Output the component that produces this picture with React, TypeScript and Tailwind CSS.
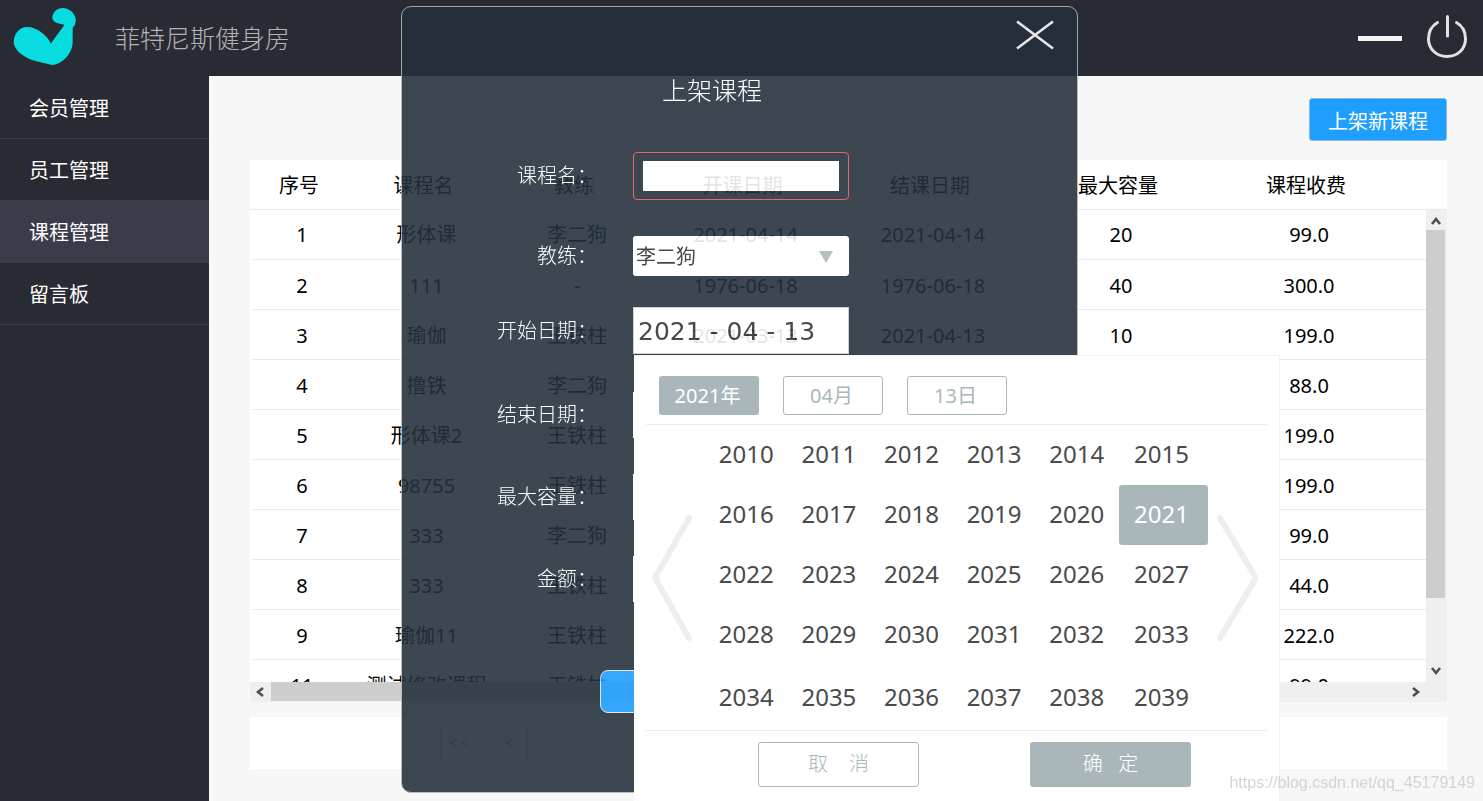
import React, { useState } from "react";

type Course = {
  id: string;
  name: string;
  coach: string;
  start?: string;
  end?: string;
  capacity?: string;
  price: string;
};

const menu = ["会员管理", "员工管理", "课程管理", "留言板"];
const headings = ["序号", "课程名", "教练", "开课日期", "结课日期", "最大容量", "课程收费"];

const courses: Course[] = [
  { id: "1", name: "形体课", coach: "李二狗", start: "2021-04-14", end: "2021-04-14", capacity: "20", price: "99.0" },
  { id: "2", name: "111", coach: "-", start: "1976-06-18", end: "1976-06-18", capacity: "40", price: "300.0" },
  { id: "3", name: "瑜伽", coach: "王铁柱", start: "2021-03-13", end: "2021-04-13", capacity: "10", price: "199.0" },
  { id: "4", name: "撸铁", coach: "李二狗", price: "88.0" },
  { id: "5", name: "形体课2", coach: "王铁柱", price: "199.0" },
  { id: "6", name: "98755", coach: "王铁柱", price: "199.0" },
  { id: "7", name: "333", coach: "李二狗", price: "99.0" },
  { id: "8", name: "333", coach: "王铁柱", price: "44.0" },
  { id: "9", name: "瑜伽11", coach: "王铁柱", price: "222.0" },
  { id: "11", name: "测试修改课程", coach: "王铁柱", price: "99.0" },
];

const years = Array.from({ length: 30 }, (_, i) => 2010 + i);

function Columns() {
  return (
    <colgroup>
      <col className="w-[98px]" />
      <col className="w-[151px]" />
      <col className="w-[150px]" />
      <col className="w-[187px]" />
      <col className="w-[188px]" />
      <col className="w-[188px]" />
      <col className="w-[188px]" />
      <col />
    </colgroup>
  );
}

function Logo() {
  return (
    <svg viewBox="40 20 192 177" className="h-[59px] w-16" aria-hidden="true">
      <path
        fill="#08dce0"
        d="M154 130C142 105 112 80 82 80C58 80 42 102 42 126C43 150 75 174 110 183C130 187 150 194 160 194C182 192 218 165 219 125V82C225 78 229 69 228 57C226 38 208 23 190 23C171 23 158 38 158 52C159 66 178 70 194 73C184 90 165 111 154 130Z"
      />
    </svg>
  );
}

function Header() {
  return (
    <header className="flex h-[76px] items-center bg-[#292b34] pl-[13px] pr-[15px]">
      <div className="flex h-full items-start pt-[7px]">
        <Logo />
      </div>
      <h1 className="ml-[38px] pt-0.5 text-[25px] font-light text-[#b4b4b4]">菲特尼斯健身房</h1>
      <div className="ml-auto flex items-center gap-6">
        <button type="button" aria-label="最小化" className="h-[5px] w-11 bg-[#f4f4f4]" />
        <button type="button" aria-label="退出">
          <svg viewBox="0 0 42 46" className="h-[46px] w-[42px]" fill="none" stroke="#e2e2e2" strokeWidth="3" strokeLinecap="round">
            <path d="M11.500 7.500C5.500 11 2.500 17 2.500 24C2.500 34 10.500 41.500 21 41.500C31.500 41.500 39.500 34 39.500 24C39.500 17 36.500 11 30.500 7.500" />
            <path d="M21.500 1.500V21" />
          </svg>
        </button>
      </div>
    </header>
  );
}

function Sidebar() {
  return (
    <nav className="w-[209px] shrink-0 bg-[#292b34] pt-px">
      {menu.map((item) => (
        <a
          key={item}
          href="#"
          className={
            item === "课程管理"
              ? "flex h-[62px] items-center border-b border-[#393c48] bg-[#3a3c49] pl-[29px] pt-[3px] text-xl text-white"
              : "flex h-[62px] items-center border-b border-[#393c48] pl-[29px] pt-[3px] text-xl text-white"
          }
        >
          {item}
        </a>
      ))}
    </nav>
  );
}

function Arrow({ d }: { d: string }) {
  return (
    <svg viewBox="0 0 20 20" className="size-5" fill="none" stroke="#505050" strokeWidth="2.6" aria-hidden="true">
      <path d={d} />
    </svg>
  );
}

function CourseTable() {
  return (
    <section className="mt-[19px] bg-white">
      <table className="w-full table-fixed border-b border-[#e9e9e9]">
        <Columns />
        <thead>
          <tr className="h-[49px]">
            {headings.map((h) => (
              <th key={h} scope="col" className="pt-1 text-xl font-normal">
                {h}
              </th>
            ))}
            <td />
          </tr>
        </thead>
      </table>
      <div className="flex h-[472px]">
        <div className="min-w-0 flex-1 overflow-hidden pl-[3px]">
          <table className="w-full table-fixed" aria-label="课程">
            <Columns />
            <tbody>
              {courses.map((c) => (
                <tr key={c.id} className="h-[50px] border-b border-[#e9e9e9] text-center text-xl *:pt-0.5">
                  <td>{c.id}</td>
                  <td>{c.name}</td>
                  <td>{c.coach}</td>
                  <td>{c.start}</td>
                  <td>{c.end}</td>
                  <td>{c.capacity}</td>
                  <td>{c.price}</td>
                  <td />
                </tr>
              ))}
            </tbody>
          </table>
        </div>
        <div className="flex w-[21px] flex-col bg-[#efefef]">
          <Arrow d="M6 14L10 9L14 14" />
          <div className="h-[368px] w-[19px] bg-[#cdcdcd]" />
          <div className="mt-auto">
            <Arrow d="M6 6L10 11L14 6" />
          </div>
        </div>
      </div>
      <div className="flex h-5 items-center bg-[#efefef] pr-[21px]">
        <Arrow d="M13 6L8 10L13 14" />
        <div className="ml-px h-[19px] w-3/4 bg-[#cdcdcd]" />
        <div className="ml-auto">
          <Arrow d="M7 6L12 10L7 14" />
        </div>
      </div>
    </section>
  );
}

function FormRow({ id, label, className, children }: { id: string; label: string; className: string; children: React.ReactNode }) {
  return (
    <div className={className}>
      <label htmlFor={id} className="w-[195px] text-right text-xl font-light text-white">
        {label}
      </label>
      <div className="ml-9 w-[216px]">{children}</div>
    </div>
  );
}

function CourseDialog() {
  return (
    <form
      role="dialog"
      aria-label="上架课程"
      className="flex h-[787px] flex-col rounded-[10px] border border-[#b5b5b5] bg-[#25313d] opacity-[0.89]"
    >
      <button type="button" aria-label="关闭" className="mr-[23px] mt-[13px] self-end">
        <svg viewBox="0 0 38 30" className="h-[30px] w-[38px]" fill="none" stroke="#fff" strokeWidth="2.6">
          <path d="M1 1.500L37 28.500M37 1.500L1 28.500" />
        </svg>
      </button>
      <h2 className="mr-14 mt-[22px] self-center pl-px text-[25px] leading-9 font-light text-white">上架课程</h2>
      <FormRow id="name" label="课程名：" className="mt-11 flex items-center">
        <div className="h-12 rounded border border-[#e8564c] px-[9px] py-2">
          <input id="name" className="block h-[30px] w-full bg-white px-1 text-xl outline-none" />
        </div>
      </FormRow>
      <FormRow id="coach" label="教练：" className="mt-9 flex items-center">
        <div className="relative">
          <select id="coach" className="block h-10 w-full appearance-none rounded-[3px] bg-white pl-[3px] pt-0.5 text-xl text-[#333]">
            <option>李二狗</option>
            <option>王铁柱</option>
          </select>
          <svg viewBox="0 0 14 12" className="pointer-events-none absolute right-4 top-[15px] h-3 w-3.5" fill="#a9b9bc" aria-hidden="true">
            <path d="M0 0H14L7 12Z" />
          </svg>
        </div>
      </FormRow>
      <FormRow id="start" label="开始日期：" className="mt-[31px] flex items-center">
        <input
          id="start"
          defaultValue="2021 - 04 - 13"
          className="block h-[47px] w-full border border-[#ccc] bg-white pl-1 pt-0.5 font-['DejaVu_Sans',sans-serif] text-[25px] text-[#333] outline-none"
        />
      </FormRow>
      <FormRow id="end" label="结束日期：" className="mt-[38px] flex items-center">
        <input id="end" className="block h-[46px] w-full bg-white" />
      </FormRow>
      <FormRow id="capacity" label="最大容量：" className="mt-9 flex items-center">
        <input id="capacity" className="block h-[46px] w-full bg-white" />
      </FormRow>
      <FormRow id="price" label="金额：" className="mt-9 flex items-center">
        <input id="price" className="block h-[46px] w-full bg-white" />
      </FormRow>
      <button type="submit" aria-label="提交" className="mt-[68px] h-[43px] w-[280px] self-center rounded-lg border border-[#e4e4e4] bg-[#1e9fff]" />
    </form>
  );
}

function DatePicker() {
  const [year, setYear] = useState(2021);
  return (
    <div className="absolute left-[233px] top-[349px] w-[646px] border-r border-t border-[#f3f3f3] bg-white px-3 pb-8">
      <div className="flex gap-6 px-[13px] pb-[9px] pt-5">
        <button type="button" className="h-[39px] w-[100px] rounded-[3px] bg-[#a9b7bb] pr-[3px] text-xl text-white">
          {year}年
        </button>
        <button type="button" className="h-[39px] w-[100px] rounded-[3px] border border-[#a9b9bc] pr-[3px] text-xl text-[#a9b7bb]">
          04月
        </button>
        <button type="button" className="h-[39px] w-[100px] rounded-[3px] border border-[#a9b9bc] pr-[3px] text-xl text-[#a9b7bb]">
          13日
        </button>
      </div>
      <div className="flex items-center border-y border-[#ececec] px-1.5">
        <button type="button" aria-label="上一页">
          <svg viewBox="0 0 42 128" className="h-32 w-[42px]" fill="none" stroke="#eee" strokeWidth="6" strokeLinecap="round">
            <path d="M37 4L3 64L37 124" />
          </svg>
        </button>
        <div className="ml-3 grid w-[502px] grid-cols-[repeat(5,minmax(0,1fr))_89px] grid-rows-[repeat(4,60px)_65px]">
          {years.map((y) => (
            <button
              key={y}
              type="button"
              onClick={() => setYear(y)}
              className={
                y === year
                  ? "rounded-[3px] bg-[#a9b7bb] pb-0.5 pr-1 text-2xl text-white"
                  : "pb-0.5 pr-0.5 text-2xl text-[#4a4a4a] [&:nth-child(6n)]:pr-1"
              }
            >
              {y}
            </button>
          ))}
        </div>
        <button type="button" aria-label="下一页" className="ml-2">
          <svg viewBox="0 0 42 128" className="h-32 w-[42px]" fill="none" stroke="#eee" strokeWidth="6" strokeLinecap="round">
            <path d="M4 4L40 64L4 124" />
          </svg>
        </button>
      </div>
      <div className="flex justify-between pl-28 pr-[76px] pt-[11px]">
        <button type="button" className="h-[45px] w-[161px] rounded-[3px] border border-[#a9b9bc] pb-0.5 text-xl font-light whitespace-pre text-[#a9b7bb]">
          {"取    消"}
        </button>
        <button type="button" className="h-[45px] w-[161px] rounded-[3px] bg-[#a9b7bb] pb-0.5 text-xl font-light whitespace-pre text-white">
          {"确   定"}
        </button>
      </div>
    </div>
  );
}

export default function App() {
  return (
    <div lang="zh-CN" className="flex min-h-screen flex-col bg-[#f7f7f7] font-['Noto_Sans','Noto_Sans_CJK_SC',sans-serif] text-black">
      <Header />
      <div className="flex flex-1">
        <Sidebar />
        <main className="min-w-0 flex-1 pl-[41px] pr-9 pt-[22px]">
          <div className="flex justify-end">
            <button type="button" className="h-[43px] w-[138px] rounded-[3px] border border-[#8ab9df] bg-[#1e9fff] pt-1 text-xl text-white">
              上架新课程
            </button>
          </div>
          <CourseTable />
          <div className="mt-[15px] flex h-[52px] items-center gap-3 bg-white pl-[190px]">
            <button type="button" className="size-[38px] rounded border border-[#d8d8d8] text-sm text-[#999]">
              &lt; &lt;
            </button>
            <button type="button" className="size-[38px] rounded border border-[#d8d8d8] text-sm text-[#999]">
              &lt;
            </button>
          </div>
        </main>
      </div>
      <div className="fixed inset-0 flex items-start justify-center overflow-hidden pr-1 pt-1.5">
        <div className="relative w-[677px]">
          <CourseDialog />
          <DatePicker />
        </div>
      </div>
      <a
        href="https://blog.csdn.net/qq_45179149"
        className="fixed bottom-2 right-2 font-['Liberation_Sans',sans-serif] text-base leading-5 text-[#d4d4d4]"
      >
        https://blog.csdn.net/qq_45179149
      </a>
    </div>
  );
}
